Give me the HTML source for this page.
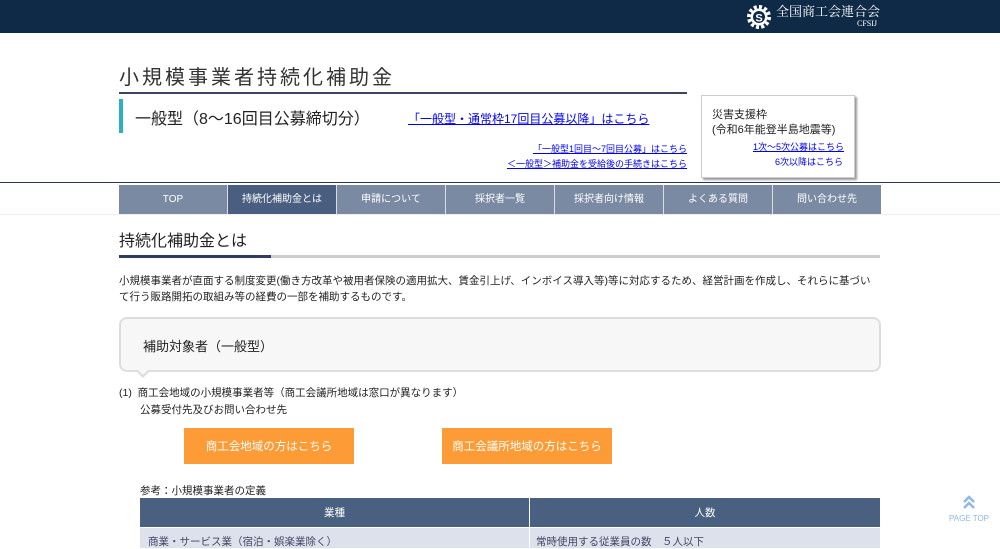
<!DOCTYPE html>
<html><head><meta charset="utf-8"><style>
*{margin:0;padding:0;box-sizing:border-box}
body{width:1000px;height:542px;overflow:hidden;background:#fff;font-family:"Liberation Sans","Noto Sans CJK JP",sans-serif;color:#222;position:relative}
.a{position:absolute}
a{color:#0000ee}
.n{flex:1;display:flex;align-items:center;justify-content:center;line-height:1}
</style></head><body>
<div class="a" style="left:0;top:0;width:1000px;height:33px;background:#0e2a47"></div>
<svg class="a" style="left:746px;top:4px" width="26" height="26" viewBox="0 0 26 26"><circle cx="13" cy="13" r="10" fill="none" stroke="#fff" stroke-width="4" stroke-dasharray="3 2.2"/><circle cx="13" cy="13" r="8.5" fill="#fff"/><circle cx="13" cy="13" r="6" fill="#0e2a47"/><text x="13" y="17.5" fill="#fff" font-size="11" font-weight="bold" text-anchor="middle" font-family="Liberation Sans">S</text></svg>
<div class="a" style="left:776px;top:3px;color:#fff;font-size:13px;line-height:16px;font-family:'Noto Serif CJK SC',serif">全国商工会連合会</div>
<div class="a" style="left:857px;top:19px;color:#fff;font-size:8px;line-height:9px;font-family:'Liberation Serif',serif">CFSIJ</div>

<div class="a" style="left:119px;top:61px;font-size:20px;letter-spacing:3px;color:#333">小規模事業者持続化補助金</div>
<div class="a" style="left:119px;top:92px;width:568px;height:2px;background:#3a4560"></div>
<div class="a" style="left:119px;top:99px;width:4px;height:34px;background:#2bb0bf"></div>
<div class="a" style="left:135px;top:105px;font-size:16px;color:#222">一般型（8〜16回目公募締切分）</div>
<a class="a" style="left:408px;top:110px;font-size:12px" href="#">「一般型・通常枠17回目公募以降」はこちら</a>
<a class="a" style="right:313px;top:142px;font-size:9px" href="#">「一般型1回目〜7回目公募」はこちら</a>
<a class="a" style="right:313px;top:157px;font-size:9px" href="#">＜一般型＞補助金を受給後の手続きはこちら</a>

<div class="a" style="left:701px;top:95px;width:154px;height:83px;border:1px solid #ccc;box-shadow:2px 2px 2px #999;background:#fff"></div>
<div class="a" style="left:712px;top:108px;font-size:11px;line-height:15px">災害支援枠<br>(令和6年能登半島地震等)</div>
<a class="a" style="left:753px;top:140px;font-size:9px" href="#">1次〜5次公募はこちら</a>
<a class="a" style="left:775px;top:155px;font-size:9px;text-decoration:none" href="#">6次以降はこちら</a>

<div class="a" style="left:0;top:182px;width:1000px;height:1px;background:#2a3550"></div>
<div class="a" style="left:0;top:214px;width:1000px;height:1px;background:#eee"></div>
<div class="a" style="left:119px;top:185px;width:762px;height:29px;display:flex;font-size:10px;color:#fff">
<div class="n" style="background:#7a8aa3;border-right:1px solid #ddd">TOP</div>
<div class="n" style="background:#4a5f80;border-right:1px solid #ddd">持続化補助金とは</div>
<div class="n" style="background:#7a8aa3;border-right:1px solid #ddd">申請について</div>
<div class="n" style="background:#7a8aa3;border-right:1px solid #ddd">採択者一覧</div>
<div class="n" style="background:#7a8aa3;border-right:1px solid #ddd">採択者向け情報</div>
<div class="n" style="background:#7a8aa3;border-right:1px solid #ddd">よくある質問</div>
<div class="n" style="background:#7a8aa3">問い合わせ先</div>
</div>

<div class="a" style="left:119px;top:227px;font-size:16px;color:#222">持続化補助金とは</div>
<div class="a" style="left:119px;top:255px;width:761px;height:3px;background:#ccc"></div>
<div class="a" style="left:119px;top:255px;width:152px;height:3px;background:#2f3d60"></div>
<div class="a" style="left:119px;top:273px;width:756px;font-size:10.5px;line-height:16px;color:#222">小規模事業者が直面する制度変更(働き方改革や被用者保険の適用拡大、賃金引上げ、インボイス導入等)等に対応するため、経営計画を作成し、それらに基づいて行う販路開拓の取組み等の経費の一部を補助するものです。</div>

<div class="a" style="left:119px;top:317px;width:762px;height:55px;border:2px solid #ddd;border-radius:8px;background:#f7f7f7"></div>
<div class="a" style="left:135px;top:370px;width:0;height:0;border-left:8px solid transparent;border-right:8px solid transparent;border-top:8px solid #ddd"></div>
<div class="a" style="left:137px;top:369px;width:0;height:0;border-left:6px solid transparent;border-right:6px solid transparent;border-top:6px solid #f7f7f7"></div>
<div class="a" style="left:143px;top:336px;font-size:13px">補助対象者（一般型）</div>

<div class="a" style="left:119px;top:385px;font-size:10.5px;line-height:17px">(1)&nbsp; 商工会地域の小規模事業者等（商工会議所地域は窓口が異なります）<br><span style="padding-left:21px">公募受付先及びお問い合わせ先</span></div>
<div class="a" style="left:184px;top:428px;width:170px;height:36px;background:#fd9b36;color:#fff;font-size:11.5px;display:flex;align-items:center;justify-content:center">商工会地域の方はこちら</div>
<div class="a" style="left:442px;top:428px;width:170px;height:36px;background:#fd9b36;color:#fff;font-size:11.5px;display:flex;align-items:center;justify-content:center">商工会議所地域の方はこちら</div>
<div class="a" style="left:140px;top:483px;font-size:10.5px">参考：小規模事業者の定義</div>
<div class="a" style="left:140px;top:498px;width:389px;height:29px;background:#4a6080;color:#fff;font-size:10.5px;display:flex;align-items:center;justify-content:center">業種</div>
<div class="a" style="left:530px;top:498px;width:350px;height:29px;background:#4a6080;color:#fff;font-size:10.5px;display:flex;align-items:center;justify-content:center">人数</div>
<div class="a" style="left:140px;top:528px;width:389px;height:20px;background:#dde1ec;font-size:10.5px;padding:6px 0 0 8px;color:#446">商業・サービス業（宿泊・娯楽業除く）</div>
<div class="a" style="left:530px;top:528px;width:350px;height:20px;background:#dde1ec;font-size:10.5px;padding:6px 0 0 6px;color:#446">常時使用する従業員の数　５人以下</div>

<svg class="a" style="left:962px;top:494px" width="14" height="16" viewBox="0 0 14 16"><path d="M2 8 L7 3 L12 8 M2 14 L7 9 L12 14" fill="none" stroke="#8fb7e8" stroke-width="2.5"/></svg>
<div class="a" style="left:949px;top:514px;font-size:8px;color:#8fb7e8">PAGE TOP</div>
</body></html>
